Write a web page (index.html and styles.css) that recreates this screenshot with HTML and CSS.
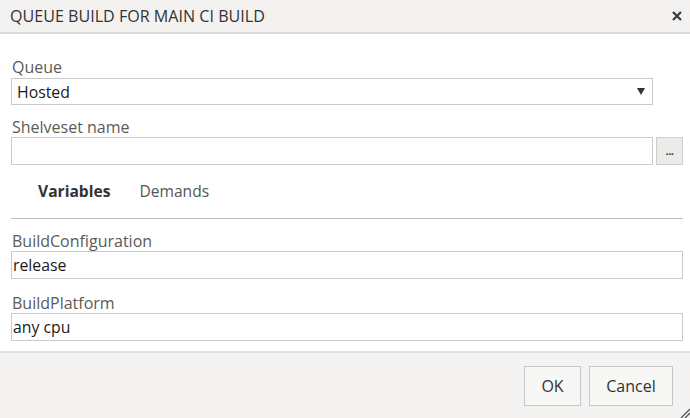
FILE: index.html
```html
<!DOCTYPE html>
<html>
<head>
<meta charset="utf-8">
<link rel="stylesheet" href="styles.css">
</head>
<body>
<div class="dialog">
  <div class="header">
    <div class="title">QUEUE BUILD FOR MAIN CI BUILD</div>
    <svg class="close" width="10" height="10" viewBox="0 0 10 10"><path d="M1 1 L9 9 M9 1 L1 9" stroke="#3a3a3a" stroke-width="2.2"/></svg>
  </div>
  <div class="content">
    <div class="field queue">
      <div class="label">Queue</div>
      <div class="select narrow">
        <span class="value">Hosted</span>
        <svg class="arrow" width="8" height="7" viewBox="0 0 8 7"><path d="M0 0 H8 L4 7 Z" fill="#333"/></svg>
      </div>
    </div>
    <div class="field shelve">
      <div class="label">Shelveset name</div>
      <div class="row">
        <div class="input narrow"></div>
        <div class="browse"><span>...</span></div>
      </div>
    </div>
    <div class="tabs">
      <span class="tab active">Variables</span>
      <span class="tab">Demands</span>
    </div>
    <div class="sep"></div>
    <div class="field var1">
      <div class="label">BuildConfiguration</div>
      <div class="input var">release</div>
    </div>
    <div class="field var2">
      <div class="label">BuildPlatform</div>
      <div class="input var">any cpu</div>
    </div>
  </div>
  <div class="footer">
    <button class="btn ok">OK</button>
    <button class="btn cancel">Cancel</button>
    <svg class="grip" width="12" height="12" viewBox="0 0 12 12"><path d="M3 12 L12 3 M7 12 L12 7" stroke="#555" stroke-width="1.3"/></svg>
  </div>
</div>
</body>
</html>
```
FILE: styles.css
```css
html, body {
  margin: 0;
  padding: 0;
  background: #ffffff;
}
body {
  font-family: "Open Sans", "Noto Sans", sans-serif;
  color: #222;
}
.dialog {
  width: 690px;
  height: 418px;
  display: flex;
  flex-direction: column;
  overflow: hidden;
}
.header {
  height: 32px;
  background: #f3f2f0;
  border-bottom: 2px solid #d9d9d9;
  display: flex;
  align-items: center;
  justify-content: space-between;
  padding: 0 8px 0 10px;
  flex: none;
}
.title {
  font-size: 16.1px;
  color: #333;
}
.close {
  display: block;
}
.content {
  flex: 1;
  padding: 0 7px 0 11px;
  display: flex;
  flex-direction: column;
}
.label {
  font-size: 16px;
  line-height: 20px;
  height: 20px;
  color: #5a5a5a;
  padding-left: 1px;
}
.queue { margin-top: 23px; }
.queue .label { margin-bottom: 1px; }
.shelve { margin-top: 12px; }
.select, .input {
  box-sizing: border-box;
  border: 1px solid #c9c9c9;
  background: #fff;
  font-size: 15.8px;
  color: #1a1a1a;
}
.select {
  height: 27px;
  display: flex;
  align-items: center;
  justify-content: space-between;
  padding: 0 7px 0 5px;
}
.narrow {
  width: 642px;
}
.row {
  display: flex;
  gap: 3px;
}
.input {
  height: 28px;
}
.browse {
  box-sizing: border-box;
  width: 27px;
  height: 28px;
  border: 1px solid #cfcfcf;
  background: #ebebea;
  display: flex;
  align-items: flex-end;
  justify-content: center;
  font-size: 11px;
  line-height: 1;
  color: #333;
  padding-bottom: 8px;
  letter-spacing: -0.5px;
  font-weight: bold;
}
.tabs {
  margin-top: 16px;
  height: 20px;
  display: flex;
  gap: 29px;
  padding-left: 27px;
  font-size: 15.6px;
  line-height: 20px;
}
.tab { color: #555; }
.tab.active {
  font-weight: bold;
  color: #333;
}
.sep {
  margin-top: 17px;
  height: 1px;
  background: #bdbdbd;
}
.var1 { margin-top: 12px; }
.var2 { margin-top: 14px; }
.input.var {
  height: 28px;
  line-height: 26px;
  padding-left: 1px;
}
.footer {
  flex: none;
  height: 67px;
  background: #f4f3f1;
  border-top: 2px solid #e2e2e2;
  display: flex;
  justify-content: flex-end;
  align-items: flex-start;
  gap: 8px;
  padding: 13px 17px 0 0;
  box-sizing: border-box;
  position: relative;
}
.btn {
  font-family: "Open Sans", "Noto Sans", sans-serif;
  font-size: 16px;
  color: #333;
  height: 40px;
  background: #f7f7f6;
  border: 1px solid #c6c6c6;
  border-radius: 0;
  padding: 0;
}
.ok { width: 57px; }
.cancel { width: 84px; }
.grip {
  position: absolute;
  right: 0;
  bottom: 0;
}
```
